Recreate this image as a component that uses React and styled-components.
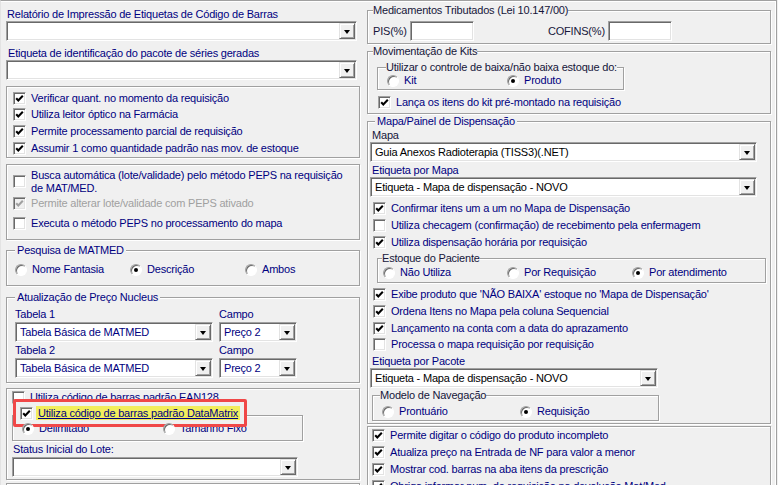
import React from "react";
import styled, { createGlobalStyle, css } from "styled-components";

const NAVY = "#000080";
const DARK = "#16163a";

const GlobalStyle = createGlobalStyle`
  html, body { margin: 0; padding: 0; background: #f0f0f0; }
  body {
    font-family: "Liberation Sans", Arial, sans-serif;
    font-size: 11px;
    letter-spacing: -0.2px;
    color: ${NAVY};
  }
  * { box-sizing: border-box; }
`;

const Screen = styled.div`
  width: 778px;
  height: 485px;
  overflow: hidden;
  background: #f0f0f0;
`;

const Frame = styled.div`
  width: 777px;
  height: 540px;
  border-top: 1px solid #a0a0a0;
  border-right: 1px solid #a0a0a0;
  border-left: 1px solid #e3e3e3;
  box-shadow: inset 0 1px 0 #fff, inset -1px 0 0 #fff;
  display: flex;
  align-items: flex-start;
  gap: 7px;
  padding-left: 5px;
`;

const Column = styled.div`
  flex: none;
  width: ${(p) => p.$w}px;
  display: flex;
  flex-direction: column;
`;

const Group = styled.div`
  position: relative;
  flex: none;
  display: flex;
  flex-direction: column;
  align-items: flex-start;
  height: ${(p) => p.$h}px;
  width: ${(p) => (p.$w ? `${p.$w}px` : "100%")};
  margin-top: ${(p) => p.$mt || 0}px;
  margin-left: ${(p) => p.$ml || 0}px;
  padding: ${(p) => p.$pad || "0"};
  border: 1px solid #a0a0a0;
  box-shadow: inset 1px 1px 0 #fff, 1px 1px 0 #fff;
`;

const Legend = styled.span`
  position: absolute;
  top: -7px;
  left: ${(p) => (p.$left ?? 8)}px;
  padding: 0 ${(p) => (p.$pad ?? 2)}px;
  line-height: 13px;
  background: #f0f0f0;
  color: ${(p) => (p.$dark ? DARK : NAVY)};
  white-space: nowrap;
`;

const FieldLabel = styled.div`
  flex: none;
  height: 13px;
  line-height: 13px;
  margin-top: ${(p) => p.$mt || 0}px;
  padding-left: ${(p) => p.$pl || 0}px;
  color: ${(p) => (p.$dark ? DARK : NAVY)};
  white-space: nowrap;
`;

const sunken = css`
  border: 1px solid;
  border-color: #a0a0a0 #fff #fff #a0a0a0;
  box-shadow: inset 1px 1px 0 #696969, inset -1px -1px 0 #e3e3e3;
`;

const ComboBox = styled.div`
  flex: none;
  width: ${(p) => p.$w}px;
  height: 20px;
  margin-top: ${(p) => p.$mt || 0}px;
  margin-left: ${(p) => p.$ml || 0}px;
  background: #fff;
  ${sunken};
  display: flex;
  align-items: center;
  padding: 1px 1px 1px 4px;
  color: ${(p) => (p.$dark ? "#000" : NAVY)};
`;

const ComboText = styled.span`
  flex: 1;
  white-space: nowrap;
  overflow: hidden;
  line-height: 13px;
`;

const DropButton = styled.span`
  flex: none;
  width: 16px;
  height: 16px;
  background: #f0f0f0;
  border: 1px solid;
  border-color: #e3e3e3 #696969 #696969 #e3e3e3;
  box-shadow: inset 1px 1px 0 #fff, inset -1px -1px 0 #a0a0a0;
  display: flex;
  align-items: center;
  justify-content: center;
  &::after {
    content: "";
    width: 0;
    height: 0;
    border-left: 3.5px solid transparent;
    border-right: 3.5px solid transparent;
    border-top: 4px solid #000;
    margin-top: 1px;
  }
`;

const TextInput = styled.div`
  flex: none;
  width: 64px;
  height: 20px;
  background: #fff;
  ${sunken};
`;

const CheckRow = styled.div`
  flex: none;
  display: flex;
  align-items: center;
  gap: 5px;
  height: ${(p) => p.$h || 17}px;
  margin-top: ${(p) => p.$mt || 0}px;
  margin-left: ${(p) => p.$ml || 0}px;
  white-space: nowrap;
  line-height: 13px;
  color: ${(p) => (p.$disabled ? "#a0a0a0" : NAVY)};
`;

const BoxShape = styled.span`
  flex: none;
  width: 13px;
  height: 13px;
  background: ${(p) => (p.$disabled ? "#f0f0f0" : "#fff")};
  ${sunken};
  display: flex;
  align-items: center;
  justify-content: center;
`;

const Check = ({ on, disabled }) => (
  <BoxShape $disabled={disabled}>
    {on && (
      <svg width="9" height="9" viewBox="0 0 9 9">
        <polyline
          points="1.2,4.2 3.3,6.4 7.8,1.8"
          fill="none"
          stroke={disabled ? "#a0a0a0" : "#000"}
          strokeWidth="2.1"
        />
      </svg>
    )}
  </BoxShape>
);

const CheckItem = ({ on, disabled, children, ...rest }) => (
  <CheckRow $disabled={disabled} {...rest}>
    <Check on={on} disabled={disabled} />
    <span>{children}</span>
  </CheckRow>
);

const RadioShape = styled.span`
  flex: none;
  position: relative;
  width: 12px;
  height: 12px;
  border-radius: 50%;
  background: #fff;
  border: 1px solid;
  border-color: #a0a0a0 #fff #fff #a0a0a0;
  box-shadow: inset 1px 1px 0 #696969;
  ${(p) =>
    p.$on &&
    css`
      &::after {
        content: "";
        position: absolute;
        left: 3px;
        top: 3px;
        width: 4px;
        height: 4px;
        border-radius: 50%;
        background: #000;
      }
    `}
`;

const RadioRow = styled.div`
  flex: none;
  display: grid;
  grid-template-columns: ${(p) => p.$cols};
  align-items: center;
  height: ${(p) => p.$h || 13}px;
  margin-top: ${(p) => p.$mt || 0}px;
  padding-left: ${(p) => p.$pl || 0}px;
  width: 100%;
`;

const RadioLabel = styled.span`
  display: flex;
  align-items: center;
  gap: 5px;
  white-space: nowrap;
  line-height: 13px;
  color: ${(p) => (p.$dark ? DARK : NAVY)};
`;

const Radio = ({ on, children, dark }) => (
  <RadioLabel $dark={dark}>
    <RadioShape $on={on} />
    <span>{children}</span>
  </RadioLabel>
);

const TaxRow = styled.div`
  display: flex;
  align-items: center;
  height: 20px;
  color: ${DARK};
`;

const TaxLabel = styled.span`
  flex: none;
  width: ${(p) => p.$w}px;
  margin-left: ${(p) => p.$ml || 0}px;
  white-space: nowrap;
`;

const PriceGrid = styled.div`
  display: grid;
  grid-template-columns: 198px 78px;
  grid-template-rows: 13px 20px;
  column-gap: 6px;
  row-gap: 1px;
  margin-top: ${(p) => p.$mt || 0}px;
`;

const TwoLine = styled.span`
  line-height: 13px;
`;

const Highlight = styled.div`
  position: absolute;
  left: 0;
  top: -17px;
  width: 234px;
  height: 28px;
  border: 3px solid #f04848;
  border-radius: 2px;
  display: flex;
  align-items: center;
  gap: 3px;
  padding-left: 4px;
  background: #f0f0f0;
`;

const Marked = styled.span`
  background: #f2ee5c;
  text-decoration: underline;
  line-height: 14px;
  padding: 0 2px;
  white-space: nowrap;
  color: ${NAVY};
`;

const Combo = ({ w, value, dark, ...rest }) => (
  <ComboBox $w={w} $dark={dark} {...rest}>
    <ComboText>{value}</ComboText>
    <DropButton />
  </ComboBox>
);

export default function App() {
  return (
    <Screen>
      <GlobalStyle />
      <Frame>
        <Column $w={354}>
          <FieldLabel $mt={7} $pl={1}>
            Relatório de Impressão de Etiquetas de Código de Barras
          </FieldLabel>
          <Combo w={351} value="" />
          <FieldLabel $mt={6} $pl={2}>
            Etiqueta de identificação do pacote de séries geradas
          </FieldLabel>
          <Combo w={351} value="" />

          <Group $mt={6} $h={72} $pad="3px 0 0 6px">
            <CheckItem on $h={16.6}>Verificar quant. no momento da requisição</CheckItem>
            <CheckItem on $h={16.6}>Utiliza leitor óptico na Farmácia</CheckItem>
            <CheckItem on $h={16.6}>Permite processamento parcial de requisição</CheckItem>
            <CheckItem on $h={16.6}>Assumir 1 como quantidade padrão nas mov. de estoque</CheckItem>
          </Group>

          <Group $mt={6} $h={76} $pad="3.5px 0 0 6px">
            <CheckRow $h={26}>
              <Check />
              <TwoLine>
                Busca automática (lote/validade) pelo método PEPS na requisição
                <br />
                de MAT/MED.
              </TwoLine>
            </CheckRow>
            <CheckItem on disabled>Permite alterar lote/validade com PEPS ativado</CheckItem>
            <CheckItem $mt={3}>Executa o método PEPS no processamento do mapa</CheckItem>
          </Group>

          <Group $mt={10} $h={36} $pad="10px 0 0 8px">
            <Legend>Pesquisa de MATMED</Legend>
            <RadioRow $cols="115px 115px auto" $h={17}>
              <Radio>Nome Fantasia</Radio>
              <Radio on>Descrição</Radio>
              <Radio>Ambos</Radio>
            </RadioRow>
          </Group>

          <Group $mt={11} $h={86} $pad="10px 0 0 8px">
            <Legend>Atualização de Preço Nucleus</Legend>
            <PriceGrid>
              <FieldLabel>Tabela 1</FieldLabel>
              <FieldLabel>Campo</FieldLabel>
              <Combo w={198} value="Tabela Básica de MATMED" />
              <Combo w={78} value="Preço 2" />
            </PriceGrid>
            <PriceGrid $mt={2}>
              <FieldLabel>Tabela 2</FieldLabel>
              <FieldLabel>Campo</FieldLabel>
              <Combo w={198} value="Tabela Básica de MATMED" />
              <Combo w={78} value="Preço 2" />
            </PriceGrid>
          </Group>

          <Group $mt={5} $h={92} $pad="0 0 0 5px">
            <CheckItem>Utiliza código de barras padrão EAN128</CheckItem>
            <Group $mt={9} $h={26} $w={291} $pad="4px 0 0 9px">
              <Highlight>
                <Check on />
                <Marked>Utiliza código de barras padrão DataMatrix</Marked>
              </Highlight>
              <RadioRow $cols="141px auto" $h={17}>
                <Radio on>Delimitado</Radio>
                <Radio>Tamanho Fixo</Radio>
              </RadioRow>
            </Group>
            <FieldLabel $mt={2} $pl={1}>
              Status Inicial do Lote:
            </FieldLabel>
            <Combo w={286} value="" $mt={1} />
          </Group>

          <Group $mt={3} $h={40} />
        </Column>

        <Column $w={404}>
          <Group $mt={9} $h={34} $pad="10px 0 0 5px">
            <Legend $left={5} $pad={0} $dark>
              Medicamentos Tributados (Lei 10.147/00)
            </Legend>
            <TaxRow>
              <TaxLabel $w={37}>PIS(%)</TaxLabel>
              <TextInput />
              <TaxLabel $w={60} $ml={74}>
                COFINS(%)
              </TaxLabel>
              <TextInput />
            </TaxRow>
          </Group>

          <Group $mt={7} $h={63} $pad="15px 0 0 9px">
            <Legend $left={5} $pad={0} $dark>
              Movimentação de Kits
            </Legend>
            <Group $h={23} $w={247} $pad="6px 0 0 9px">
              <Legend $left={8} $pad={0} $dark>
                Utilizar o controle de baixa/não baixa estoque do:
              </Legend>
              <RadioRow $cols="120px auto">
                <Radio>Kit</Radio>
                <Radio on>Produto</Radio>
              </RadioRow>
            </Group>
            <CheckItem on $mt={4} $ml={1}>
              Lança os itens do kit pré-montado na requisição
            </CheckItem>
          </Group>

          <Group $mt={7} $h={303} $pad="7px 0 0 2px">
            <Legend $left={7}>Mapa/Painel de Dispensação</Legend>
            <FieldLabel $pl={2} $dark>
              Mapa
            </FieldLabel>
            <Combo w={387} value="Guia Anexos Radioterapia (TISS3)(.NET)" dark />
            <FieldLabel $mt={2} $pl={2}>
              Etiqueta por Mapa
            </FieldLabel>
            <Combo w={387} value="Etiqueta - Mapa de dispensação - NOVO" dark />
            <CheckItem on $mt={3} $ml={3}>
              Confirmar itens um a um no Mapa de Dispensação
            </CheckItem>
            <CheckItem $ml={3}>Utiliza checagem (confirmação) de recebimento pela enfermagem</CheckItem>
            <CheckItem on $ml={3}>Utiliza dispensação horária por requisição</CheckItem>

            <Group $mt={7} $ml={7} $h={25} $w={389} $pad="7px 0 0 5px">
              <Legend $left={4} $pad={0} $dark>
                Estoque do Paciente
              </Legend>
              <RadioRow $cols="124px 125px auto">
                <Radio>Não Utiliza</Radio>
                <Radio>Por Requisição</Radio>
                <Radio on>Por atendimento</Radio>
              </RadioRow>
            </Group>

            <CheckItem on $mt={3} $ml={3}>
              Exibe produto que 'NÃO BAIXA' estoque no 'Mapa de Dispensação'
            </CheckItem>
            <CheckItem on $ml={3}>Ordena Itens no Mapa pela coluna Sequencial</CheckItem>
            <CheckItem on $ml={3}>Lançamento na conta com a data do aprazamento</CheckItem>
            <CheckItem $ml={3} $h={15}>
              Processa o mapa requisição por requisição
            </CheckItem>

            <FieldLabel $mt={3} $pl={2}>
              Etiqueta por Pacote
            </FieldLabel>
            <Combo w={288} value="Etiqueta - Mapa de dispensação - NOVO" dark />

            <Group $mt={7} $ml={2} $h={26} $w={287} $pad="9px 0 0 9px">
              <Legend $left={7} $pad={0} $dark>
                Modelo de Navegação
              </Legend>
              <RadioRow $cols="138px auto">
                <Radio>Prontuário</Radio>
                <Radio on>Requisição</Radio>
              </RadioRow>
            </Group>
          </Group>

          <Group $mt={2} $h={80} $pad="0 0 0 4px">
            <CheckItem on>Permite digitar o código do produto incompleto</CheckItem>
            <CheckItem on>Atualiza preço na Entrada de NF para valor a menor</CheckItem>
            <CheckItem on>Mostrar cod. barras na aba itens da prescrição</CheckItem>
            <CheckItem on>Obriga informar num. de requisição na devolução Mat/Med</CheckItem>
          </Group>
        </Column>
      </Frame>
    </Screen>
  );
}
